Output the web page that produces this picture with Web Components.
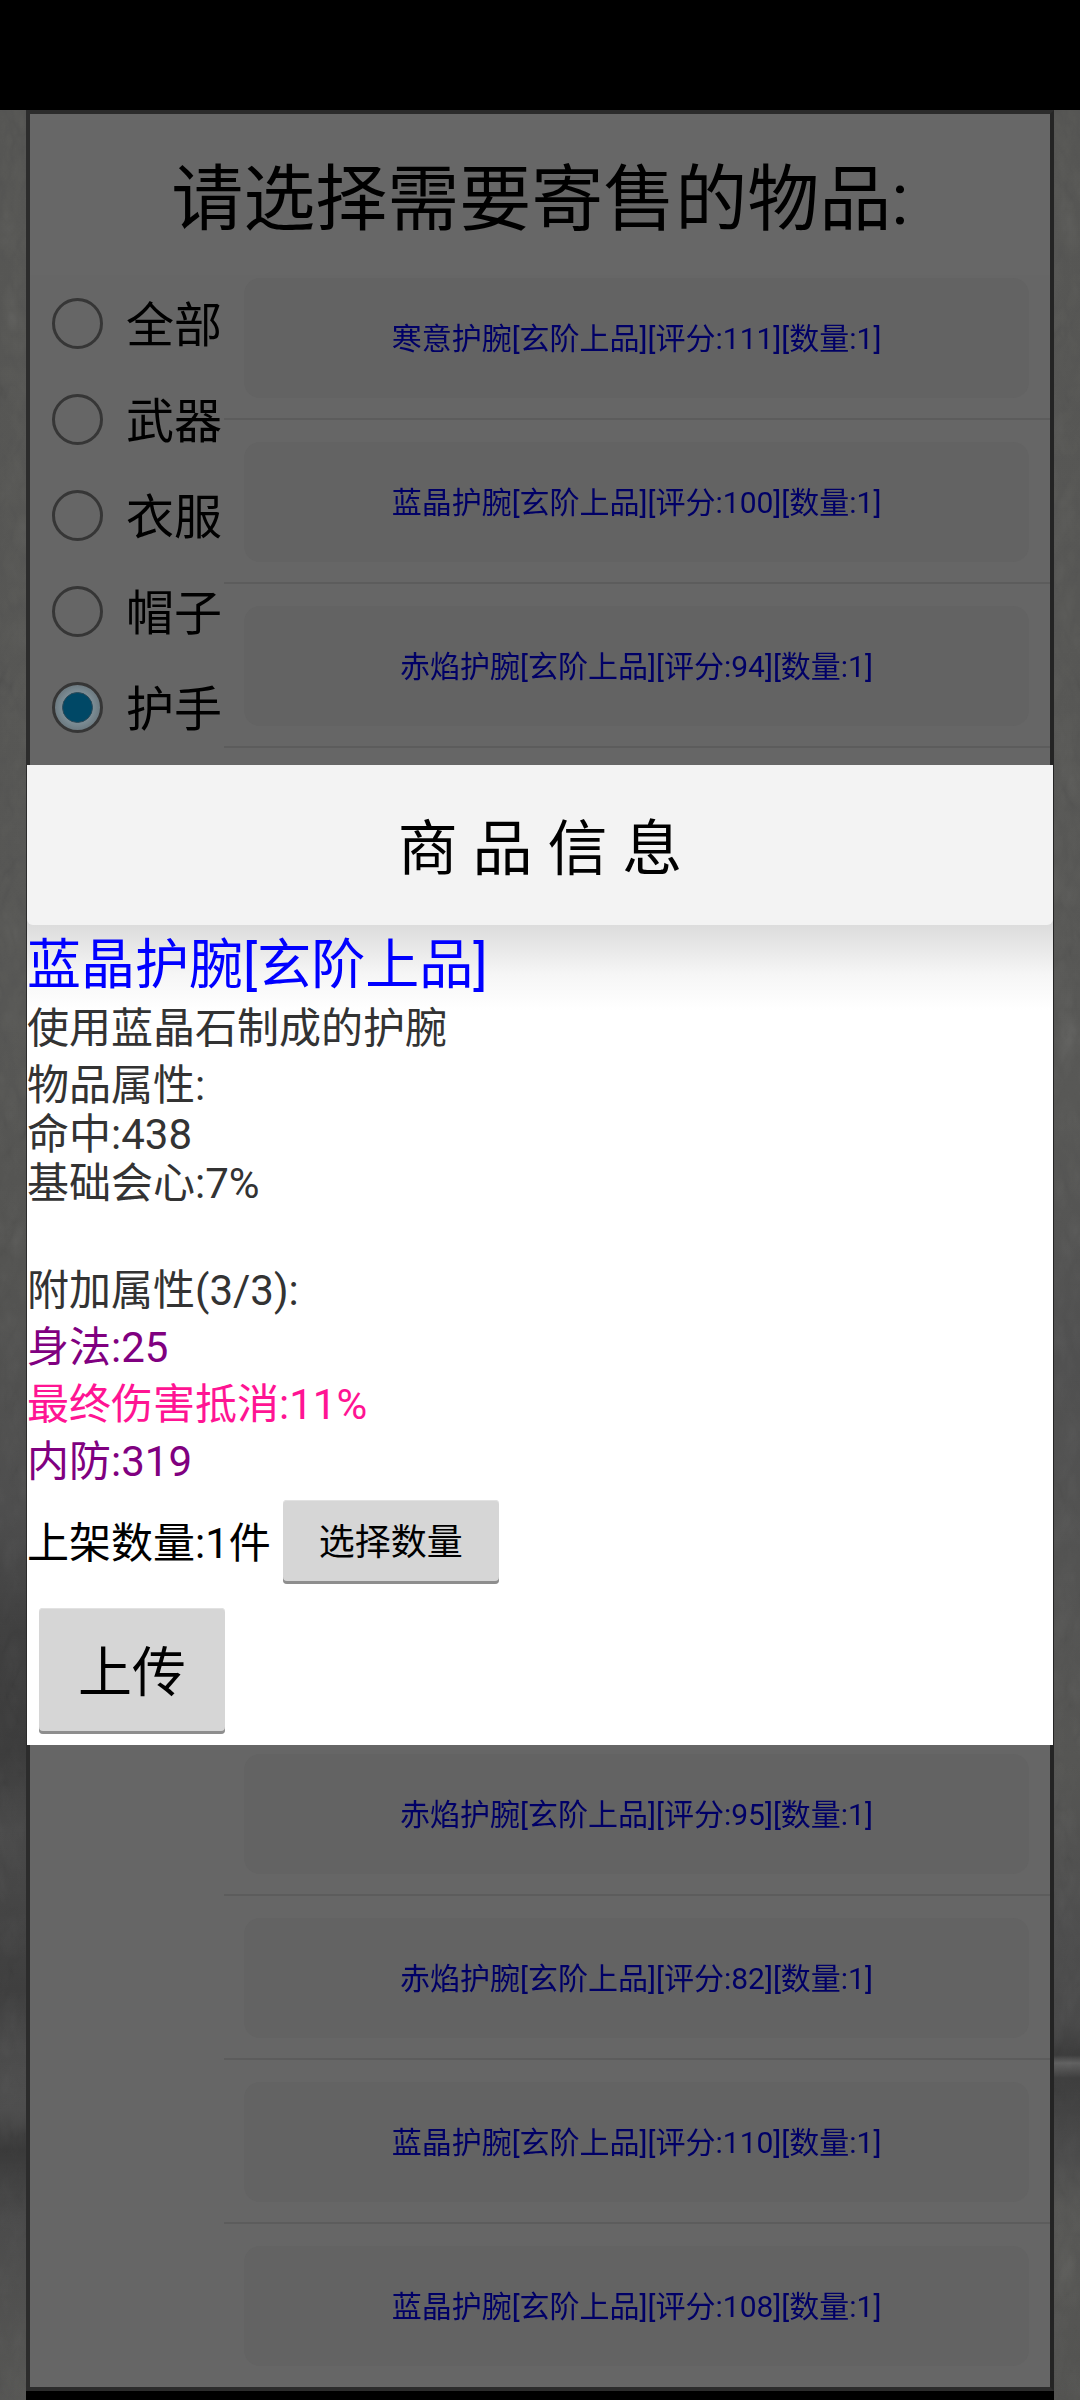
<!DOCTYPE html>
<html lang="zh">
<head>
<meta charset="utf-8">
<title>寄售</title>
<style>
  html, body { margin: 0; padding: 0; background: #000; }
  body { font-family: Roboto, "Noto Sans CJK SC", sans-serif; }
</style>
</head>
<body>
<consign-screen>
  <item-window heading="请选择需要寄售的物品:">
    <filter-radio slot="filters">全部</filter-radio>
    <filter-radio slot="filters">武器</filter-radio>
    <filter-radio slot="filters">衣服</filter-radio>
    <filter-radio slot="filters">帽子</filter-radio>
    <filter-radio slot="filters" checked>护手</filter-radio>

    <item-row>寒意护腕[玄阶上品][评分:111][数量:1]</item-row>
    <item-row>蓝晶护腕[玄阶上品][评分:100][数量:1]</item-row>
    <item-row>赤焰护腕[玄阶上品][评分:94][数量:1]</item-row>
    <item-gap rows="6"></item-gap>
    <item-row>赤焰护腕[玄阶上品][评分:95][数量:1]</item-row>
    <item-row>赤焰护腕[玄阶上品][评分:82][数量:1]</item-row>
    <item-row>蓝晶护腕[玄阶上品][评分:110][数量:1]</item-row>
    <item-row last>蓝晶护腕[玄阶上品][评分:108][数量:1]</item-row>
  </item-window>

  <goods-dialog slot="overlay" heading="商 品 信 息">
    <info-line kind="name">蓝晶护腕[玄阶上品]</info-line>
    <info-line>使用蓝晶石制成的护腕</info-line>
    <info-line kind="block">物品属性:<br>命中:438<br>基础会心:7%<br>&nbsp;</info-line>
    <info-line>附加属性(3/3):</info-line>
    <info-line color="#800080">身法:25</info-line>
    <info-line color="#ff1493">最终伤害抵消:11%</info-line>
    <info-line color="#800080">内防:319</info-line>
    <qty-row><gray-button size="small">选择数量</gray-button></qty-row>
    <gray-button size="big">上传</gray-button>
  </goods-dialog>
</consign-screen>

<script>
// Dim colours: the page sits under the dialog's 60% scrim, so they are the already darkened values
class ConsignScreen extends HTMLElement {
  constructor() {
    super();
    this.attachShadow({ mode: 'open' }).innerHTML = `
      <style>
        :host { display: block; position: relative; width: 1080px; height: 2400px; overflow: hidden; background: #000; }
        .status { height: 110px; background: #000; }
        .main { display: grid; grid-template-columns: 26px 1fr 26px; height: 2290px; }
        .left, .right { position: relative; overflow: hidden; }
        .left {
          background: linear-gradient(180deg,
            #565654 0, #575755 900px, #545452 1150px, #4e4e4e 1400px, #404040 1520px, #3c3c3c 1640px,
            #4a4a4a 1720px, #3f3f3f 1880px, #4b4b4b 1940px, #4e4e4e 2000px, #3a3a3a 2040px, #4b4b4b 2110px, #575755 2290px);
        }
        .right {
          background: linear-gradient(180deg,
            #565654 0, #585856 1000px, #505050 1250px, #565654 1650px, #4e4e4e 1820px, #4a4a4a 1910px,
            #3c3c3c 1945px, #616161 1953px, #3e3e3e 1968px, #4a4a4a 2040px, #585856 2100px, #535351 2290px);
        }
        svg { position: absolute; inset: 0; width: 100%; height: 100%; mix-blend-mode: overlay; opacity: .22; }
      </style>
      <div class="status"></div>
      <div class="main">
        <div class="left"><svg><filter id="a"><feTurbulence baseFrequency=".04 .02" numOctaves="3" seed="4"/><feColorMatrix type="saturate" values="0"/></filter><rect width="100%" height="100%" filter="url(#a)"/></svg></div>
        <slot></slot>
        <div class="right"><svg><filter id="b"><feTurbulence baseFrequency=".04 .02" numOctaves="3" seed="9"/><feColorMatrix type="saturate" values="0"/></filter><rect width="100%" height="100%" filter="url(#b)"/></svg></div>
      </div>
      <slot name="overlay"></slot>
    `;
  }
}

class ItemWindow extends HTMLElement {
  constructor() {
    super();
    this.attachShadow({ mode: 'open' }).innerHTML = `
      <style>
        :host { display: block; box-sizing: border-box; height: 2281px; border: 4px solid #2c2c2c; border-right-color: #242424; background: #666; box-shadow: 2px 3px 2px rgba(0,0,0,.35); }
        header {
          position: relative; z-index: 1; box-sizing: border-box; height: 161px; padding-bottom: 4px; display: flex; align-items: center; justify-content: center;
          background: #676767; font-size: 72px; color: #000;
        }
        .body { display: flex; height: 2112px; margin-top: -19px; }
        .filters { width: 194px; padding-top: 19px; flex: none; }
        .list { flex: 1; min-width: 0; overflow: hidden; }
      </style>
      <header></header>
      <div class="body">
        <div class="filters"><slot name="filters"></slot></div>
        <div class="list"><slot></slot></div>
      </div>
    `;
  }
  connectedCallback() {
    this.shadowRoot.querySelector('header').textContent = this.getAttribute('heading');
  }
}

class FilterRadio extends HTMLElement {
  constructor() {
    super();
    this.attachShadow({ mode: 'open' }).innerHTML = `
      <style>
        :host { display: flex; align-items: center; height: 96px; padding-left: 22px; gap: 23px; font-size: 48px; color: #000; white-space: nowrap; }
        .ring { box-sizing: border-box; width: 51px; height: 51px; border: 3px solid #363636; border-radius: 50%; display: flex; align-items: center; justify-content: center; flex: none; }
        .label { padding-bottom: 5px; }
        :host([checked]) .ring { background: radial-gradient(circle, #83949c 0 40%, #6f7d84 68%, #66686a 100%); }
        :host([checked]) .ring::after { content: ""; box-sizing: border-box; width: 31px; height: 31px; border-radius: 50%; border: 1px solid #2e4a58; background: #004866; }
      </style>
      <span class="ring"></span><span class="label"><slot></slot></span>
    `;
  }
}

class ItemRow extends HTMLElement {
  constructor() {
    super();
    this.attachShadow({ mode: 'open' }).innerHTML = `
      <style>
        :host { display: block; box-sizing: border-box; height: 164px; padding: 22px 21px 0 20px; border-bottom: 2px solid #5c5c5c; }
        :host([last]) { border-bottom: none; }
        .card { box-sizing: border-box; height: 120px; padding-bottom: 4px; border-radius: 16px; background: #636363; display: flex; align-items: center; justify-content: center; font-size: 30px; color: #000066; white-space: nowrap; }
      </style>
      <div class="card"><slot></slot></div>
    `;
  }
}

// rows the dialog covers: only their height is kept
class ItemGap extends HTMLElement {
  constructor() {
    super();
    this.attachShadow({ mode: 'open' }).innerHTML = `<style>:host { display: block; }</style>`;
  }
  connectedCallback() {
    this.style.height = (parseInt(this.getAttribute('rows'), 10) * 164) + 'px';
  }
}

class GoodsDialog extends HTMLElement {
  constructor() {
    super();
    this.attachShadow({ mode: 'open' }).innerHTML = `
      <style>
        :host { display: block; position: absolute; left: 27px; top: 765px; width: 1026px; height: 980px; background: #fff; overflow: hidden; }
        .top { background: #dcdcdc; }
        header {
          box-sizing: border-box; height: 160px; padding-bottom: 4px; background: #f3f3f3; border-radius: 0 0 6px 6px;
          display: flex; align-items: center; justify-content: center; font-size: 60px; color: #000; white-space: pre;
        }
        .content { height: 820px; background: linear-gradient(#dcdcdc, #f6f6f6 50px, #fff 85px); }
      </style>
      <div class="top"><header></header></div>
      <div class="content"><slot></slot></div>
    `;
  }
  connectedCallback() {
    this.shadowRoot.querySelector('header').textContent = this.getAttribute('heading');
  }
}

class InfoLine extends HTMLElement {
  constructor() {
    super();
    this.attachShadow({ mode: 'open' }).innerHTML = `
      <style>
        :host { display: block; font-size: 42px; line-height: 57px; color: #333; white-space: nowrap; }
        :host([kind="name"]) { font-size: 54px; line-height: 68px; padding-top: 7px; color: #0000ff; }
        :host([kind="block"]) { line-height: 49px; padding: 4px 0 5px; }
      </style>
      <slot></slot>
    `;
  }
  connectedCallback() {
    if (this.hasAttribute('color')) this.style.color = this.getAttribute('color');
  }
}

class QtyRow extends HTMLElement {
  constructor() {
    super();
    this.attachShadow({ mode: 'open' }).innerHTML = `
      <style>
        :host { display: flex; align-items: center; gap: 12px; margin-top: 10px; font-size: 42px; color: #000; white-space: nowrap; }
        span { padding-bottom: 6px; }
      </style>
      <span>上架数量:1件</span><slot></slot>
    `;
  }
}

class GrayButton extends HTMLElement {
  constructor() {
    super();
    this.attachShadow({ mode: 'open' }).innerHTML = `
      <style>
        :host { display: block; }
        button {
          display: block; box-sizing: border-box; padding: 0 0 6px; border: none; border-radius: 4px; color: #000;
          font-family: Roboto, "Noto Sans CJK SC", sans-serif;
          background: #d6d6d6; box-shadow: inset 0 -3px 0 #8e8e8e, inset 0 1px 0 #e2e2e2;
        }
        :host([size="small"]) button { width: 216px; height: 84px; font-size: 36px; }
        :host([size="big"]) { margin: 24px 0 0 12px; }
        :host([size="big"]) button { width: 186px; height: 126px; font-size: 54px; }
      </style>
      <button><slot></slot></button>
    `;
  }
}

customElements.define('consign-screen', ConsignScreen);
customElements.define('item-window', ItemWindow);
customElements.define('filter-radio', FilterRadio);
customElements.define('item-row', ItemRow);
customElements.define('item-gap', ItemGap);
customElements.define('goods-dialog', GoodsDialog);
customElements.define('info-line', InfoLine);
customElements.define('qty-row', QtyRow);
customElements.define('gray-button', GrayButton);
</script>
</body>
</html>
